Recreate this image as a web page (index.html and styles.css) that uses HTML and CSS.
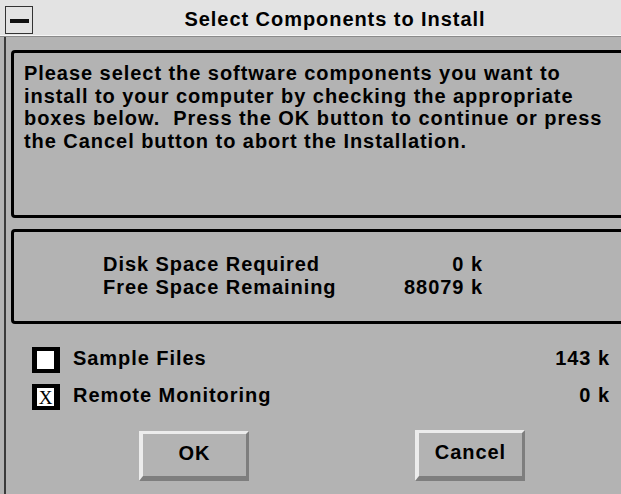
FILE: index.html
```html
<!DOCTYPE html>
<html lang="en">
<head>
<meta charset="utf-8">
<title>Select Components to Install</title>
<link rel="stylesheet" href="styles.css">
</head>
<body>
<div class="window">
  <div class="titlebar">
    <div class="sysmenu"><span class="sysmenu-dash"></span></div>
    <div class="title">Select Components to Install</div>
  </div>
  <div class="client">
    <div class="panel panel-message">
      <p class="message">Please select the software components you want to<br>install to your computer by checking the appropriate<br>boxes below.&nbsp; Press the OK button to continue or press<br>the Cancel button to abort the Installation.</p>
    </div>
    <div class="panel panel-space">
      <div class="space-grid">
        <span>Disk Space Required</span><span class="num">0 k</span>
        <span>Free Space Remaining</span><span class="num">88079 k</span>
      </div>
    </div>
    <div class="components">
      <div class="component">
        <span class="checkbox"></span>
        <span class="component-name">Sample Files</span>
        <span class="component-size">143 k</span>
      </div>
      <div class="component">
        <span class="checkbox checked">X</span>
        <span class="component-name">Remote Monitoring</span>
        <span class="component-size">0 k</span>
      </div>
    </div>
    <div class="buttons">
      <button class="btn btn-ok">OK</button>
      <button class="btn btn-cancel">Cancel</button>
    </div>
  </div>
</div>
</body>
</html>
```

FILE: styles.css
```css
html, body {
  margin: 0;
  padding: 0;
}

body {
  width: 621px;
  height: 494px;
  overflow: hidden;
  background: #b3b3b3;
  font-family: "Liberation Sans", Arial, sans-serif;
  font-weight: bold;
  font-size: 20px;
  letter-spacing: 0.95px;
  color: #000;
}

.window {
  width: 670px;
  height: 494px;
  display: flex;
  flex-direction: column;
}

/* title bar */
.titlebar {
  position: relative;
  height: 35px;
  background: #e3e3e3;
  border-bottom: 1px solid #f6f6f6;
  box-shadow: 0 1px 0 #8a8a8a;
  display: flex;
  align-items: center;
  justify-content: center;
  flex-shrink: 0;
}

.sysmenu {
  position: absolute;
  left: 5px;
  top: 6px;
  width: 26px;
  height: 26px;
  border: 1px solid #333;
  background: #e3e3e3;
  display: flex;
  align-items: center;
  justify-content: center;
}

.sysmenu-dash {
  display: block;
  width: 19px;
  height: 4px;
  background: #111;
  margin-top: 1px;
}

.title {
  margin-top: 4px;
}

/* client area */
.client {
  flex: 1;
  margin-top: 1px;
  margin-left: 4px;
  border-left: 2px solid #3a3a3a;
  padding: 13px 0 0 5px;
  display: flex;
  flex-direction: column;
}

.panel {
  box-sizing: border-box;
  border: 3px solid #000;
  border-radius: 4px;
  width: 648px;
}

.panel-message {
  height: 168px;
  padding: 9px 0 0 10px;
}

.message {
  margin: 0;
  line-height: 22.6px;
}

.panel-space {
  margin-top: 11px;
  height: 95px;
  padding: 21px 0 0 89px;
}

.space-grid {
  display: grid;
  grid-template-columns: 260px 120px;
  line-height: 23px;
}

.num {
  text-align: right;
}

/* component check list */
.components {
  margin-top: 23px;
  display: flex;
  flex-direction: column;
  gap: 11px;
  width: 599px;
}

.component {
  display: flex;
  align-items: center;
  height: 26px;
}

.checkbox {
  box-sizing: border-box;
  width: 28px;
  height: 26px;
  margin-left: 21px;
  border-style: solid;
  border-color: #000;
  border-width: 4px 6px 4px 5px;
  background: #fff;
  display: flex;
  align-items: center;
  justify-content: center;
  font-family: "Liberation Serif", "Times New Roman", serif;
  font-weight: normal;
  font-size: 19px;
  letter-spacing: 0;
  line-height: 1;
}

.component-name {
  margin-left: 13px;
  margin-top: -3px;
  flex: 1;
}

.component-size {
  margin-top: -3px;
}

/* buttons */
.buttons {
  margin-top: 21px;
  display: flex;
  gap: 166px;
  padding-left: 128px;
}

.btn {
  box-sizing: border-box;
  width: 110px;
  height: 50px;
  padding: 0 0 4px 0;
  background: #b3b3b3;
  border-style: solid;
  border-width: 3px 3px 5px 4px;
  border-color: #ececec #7e7e7e #7e7e7e #ececec;
  font: inherit;
  letter-spacing: 0.95px;
  color: #000;
}

.btn-cancel {
  margin-top: -1px;
  height: 51px;
}
```
